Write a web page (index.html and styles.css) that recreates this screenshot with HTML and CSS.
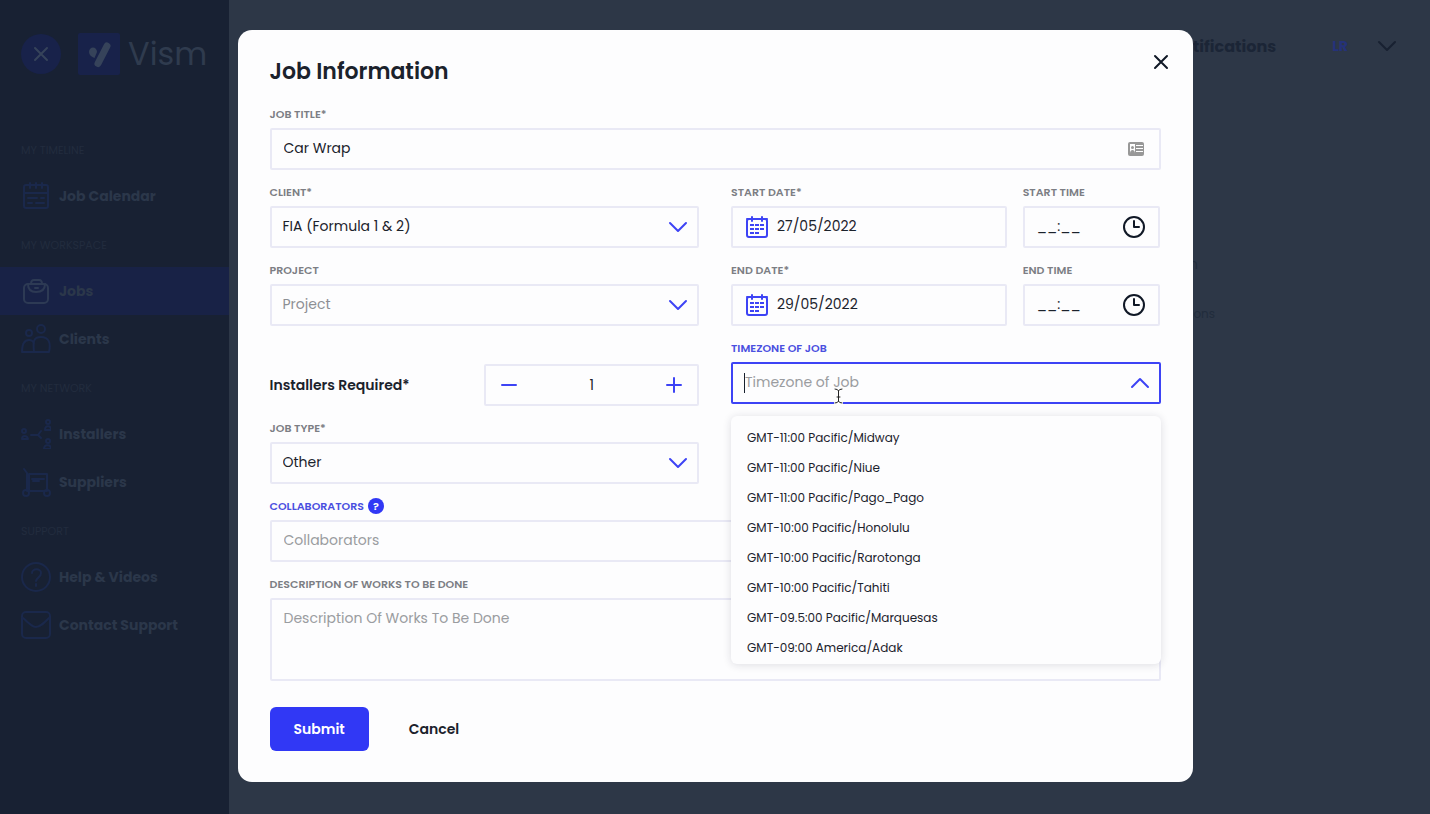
FILE: index.html
```html
<!DOCTYPE html>
<html lang="en">
<head>
  <meta charset="utf-8">
  <title>Vism - Job Information</title>
  <link rel="stylesheet" href="styles.css">
</head>
<body>
  <div class="page">
    <!-- Sidebar -->
    <aside class="sidebar">
      <div class="brand">
        <button class="brand-close" type="button" aria-label="Close menu">
          <svg width="16" height="16" viewBox="0 0 16 16"><path d="M2 2l12 12M14 2L2 14"/></svg>
        </button>
        <svg class="brand-mark" width="42" height="42" viewBox="0 0 42 42">
          <rect width="42" height="42" rx="2"/>
          <path class="leaf" d="M11 19c0-3 2-4.500 4-4.500s4 2 4 4.500l-2.500 6c-3-1-5.500-3-5.500-6z"/>
          <path class="stroke" d="M29 13L20 30.500"/>
        </svg>
        <span class="brand-name">Vism</span>
      </div>

      <nav class="menu">
        <h2 class="menu-heading">MY TIMELINE</h2>
        <a class="menu-item" href="#">
          <svg viewBox="0 0 30 30"><rect x="3" y="4" width="24" height="23" rx="2"/><path d="M3 12h24M9 2v5M15 2v5M21 2v5M7 17h9M15 22h8M7 22h4M20 17h3"/></svg>
          Job Calendar
        </a>
        <h2 class="menu-heading">MY WORKSPACE</h2>
        <a class="menu-item active" href="#">
          <svg viewBox="0 0 30 30"><rect x="3" y="8" width="24" height="19" rx="4"/><path d="M10 8c0-3 1-4 3-4h5c2 0 3 1 3 4M7 8c0 6 3 8 8 8s9-2 9-8M9 8h13M14 12h3"/></svg>
          Jobs
        </a>
        <a class="menu-item" href="#">
          <svg viewBox="0 0 30 30"><circle cx="8" cy="9" r="3"/><circle cx="20" cy="5" r="4"/><path d="M1 28c0-8 2-12 7-12 3 0 4 1 5 3M1 28h27c2-9 0-15-8-15s-8 5-7 15"/></svg>
          Clients
        </a>
        <h2 class="menu-heading">MY NETWORK</h2>
        <a class="menu-item" href="#">
          <svg viewBox="0 0 30 30"><circle cx="3" cy="12" r="2"/><circle cx="27" cy="3" r="2"/><circle cx="27" cy="22" r="2"/><path d="M1 20c0-4 5-4 6 0zM24 11c0-5 6-5 6 0zM23 30c0-5 7-5 7 0zM10 16h7l3-4M17 16l3 3"/></svg>
          Installers
        </a>
        <a class="menu-item" href="#">
          <svg viewBox="0 0 30 30"><path d="M3 2l3 4v18h19M8 7h18v17H8zM11 12h12M12 14h6"/><circle cx="5" cy="26" r="3"/><circle cx="26" cy="26" r="3"/></svg>
          Suppliers
        </a>
        <h2 class="menu-heading">SUPPORT</h2>
        <a class="menu-item" href="#">
          <svg viewBox="0 0 30 30"><circle cx="15" cy="15" r="14"/><path d="M11 11c0-5 9-5 9 0 0 4-4 4-5 8M15 22v2"/></svg>
          Help &amp; Videos
        </a>
        <a class="menu-item" href="#">
          <svg viewBox="0 0 30 30"><rect x="1" y="2" width="28" height="26" rx="4"/><path d="M2 8c6 5 9 9 13 9s8-4 13-9"/></svg>
          Contact Support
        </a>
      </nav>
    </aside>

    <!-- Page behind the dialog -->
    <main class="main">
      <header class="topbar">
        <span class="topbar-title">Notifications</span>
        <span class="avatar">LR</span>
        <svg class="topbar-arrow" width="20" height="12" viewBox="0 0 20 12"><path d="M2 2l8 8 8-8"/></svg>
      </header>
      <p class="behind-title">n</p>
      <p class="behind-text">ons</p>
    </main>
  </div>

  <!-- Job dialog -->
  <div class="overlay">
    <form class="modal" role="dialog" aria-labelledby="modalTitle">
      <button class="modal-close" type="button" aria-label="Close">
        <svg width="18" height="18" viewBox="0 0 18 18"><path d="M3 3l12 12M15 3L3 15"/></svg>
      </button>
      <h1 class="modal-title" id="modalTitle">Job Information</h1>

      <div class="form-grid">
        <div class="field full">
          <label for="jobTitle">JOB TITLE*</label>
          <div class="control">
            <input type="text" id="jobTitle" value="Car Wrap">
            <svg class="card-icon" width="16" height="14" viewBox="0 0 16 14">
              <rect width="16" height="14" rx="2" fill="#989898"/>
              <path d="M2 2h5v10H2zM8 3h7v1H8zM8 6h7v1H8zM8 9h7v1H8z" fill="#fff"/>
              <path d="M2 12c0-3 1-4 2.500-4S7 9 7 12z" fill="#989898"/>
              <circle cx="4.500" cy="5.500" r="1.500" fill="#989898"/>
            </svg>
          </div>
        </div>

        <div class="field">
          <label for="client">CLIENT*</label>
          <div class="control">
            <select id="client"><option>FIA (Formula 1 &amp; 2)</option></select>
            <svg class="arrow" width="20" height="12" viewBox="0 0 20 12"><path d="M2 2l8 8 8-8"/></svg>
          </div>
        </div>
        <div class="date-row">
          <div class="field">
            <label for="startDate">START DATE*</label>
            <div class="control with-calendar">
              <svg class="calendar" width="24" height="24" viewBox="0 0 24 24"><rect x="2" y="4" width="20" height="18" rx="2"/><path d="M2 4h20M7 2v4M17 2v4"/><path class="days" d="M5 10h14M5 14h14M5 18h9"/></svg>
              <input type="text" id="startDate" value="27/05/2022">
            </div>
          </div>
          <div class="field">
            <label for="startTime">START TIME</label>
            <div class="control">
              <input class="time" type="text" id="startTime" value="__:__">
              <svg class="clock" width="24" height="24" viewBox="0 0 24 24"><circle cx="12" cy="12" r="10"/><path d="M12 6v6h5"/></svg>
            </div>
          </div>
        </div>

        <div class="field">
          <label for="project">PROJECT</label>
          <div class="control">
            <select class="empty" id="project"><option>Project</option></select>
            <svg class="arrow" width="20" height="12" viewBox="0 0 20 12"><path d="M2 2l8 8 8-8"/></svg>
          </div>
        </div>
        <div class="date-row">
          <div class="field">
            <label for="endDate">END DATE*</label>
            <div class="control with-calendar">
              <svg class="calendar" width="24" height="24" viewBox="0 0 24 24"><rect x="2" y="4" width="20" height="18" rx="2"/><path d="M2 4h20M7 2v4M17 2v4"/><path class="days" d="M5 10h14M5 14h14M5 18h9"/></svg>
              <input type="text" id="endDate" value="29/05/2022">
            </div>
          </div>
          <div class="field">
            <label for="endTime">END TIME</label>
            <div class="control">
              <input class="time" type="text" id="endTime" value="__:__">
              <svg class="clock" width="24" height="24" viewBox="0 0 24 24"><circle cx="12" cy="12" r="10"/><path d="M12 6v6h5"/></svg>
            </div>
          </div>
        </div>

        <div class="installers">
          <label for="installers">Installers Required*</label>
          <div class="stepper">
            <button type="button" aria-label="Less"><svg width="18" height="18" viewBox="0 0 18 18"><path d="M2 9h14"/></svg></button>
            <input type="text" id="installers" value="1">
            <button type="button" aria-label="More"><svg width="18" height="18" viewBox="0 0 18 18"><path d="M2 9h14M9 2v14"/></svg></button>
          </div>
        </div>
        <div class="field timezone">
          <label class="blue" for="timezone">TIMEZONE OF JOB</label>
          <div class="control open">
            <input type="text" id="timezone" role="combobox" aria-expanded="true" aria-controls="timezoneList" placeholder="Timezone of Job">
            <span class="caret"></span>
            <svg class="arrow" width="20" height="12" viewBox="0 0 20 12"><path d="M2 10l8-8 8 8"/></svg>
            <svg class="pointer" width="9" height="16" viewBox="0 0 9 16"><path class="halo" d="M1 1q3 0 3.500 2Q5 1 8 1M4.500 3v10M1 15q3 0 3.500-2 .5 2 3.500 2M3 9h3"/><path d="M1 1q3 0 3.500 2Q5 1 8 1M4.500 3v10M1 15q3 0 3.500-2 .5 2 3.500 2M3 9h3"/></svg>
          </div>
          <ul class="dropdown" id="timezoneList" role="listbox">
            <li role="option">GMT-11:00 Pacific/Midway</li>
            <li role="option">GMT-11:00 Pacific/Niue</li>
            <li role="option">GMT-11:00 Pacific/Pago_Pago</li>
            <li role="option">GMT-10:00 Pacific/Honolulu</li>
            <li role="option">GMT-10:00 Pacific/Rarotonga</li>
            <li role="option">GMT-10:00 Pacific/Tahiti</li>
            <li role="option">GMT-09.5:00 Pacific/Marquesas</li>
            <li role="option">GMT-09:00 America/Adak</li>
          </ul>
        </div>

        <div class="field">
          <label for="jobType">JOB TYPE*</label>
          <div class="control">
            <select id="jobType"><option>Other</option></select>
            <svg class="arrow" width="20" height="12" viewBox="0 0 20 12"><path d="M2 2l8 8 8-8"/></svg>
          </div>
        </div>

        <div class="field full">
          <div class="label-row">
            <label class="blue" for="collaborators">COLLABORATORS</label>
            <button class="help" type="button">?</button>
          </div>
          <div class="control">
            <input type="text" id="collaborators" placeholder="Collaborators">
          </div>
        </div>

        <div class="field full">
          <label for="description">DESCRIPTION OF WORKS TO BE DONE</label>
          <textarea id="description" placeholder="Description Of Works To Be Done"></textarea>
        </div>
      </div>

      <div class="actions">
        <button class="submit" type="submit">Submit</button>
        <button class="cancel" type="button">Cancel</button>
      </div>
    </form>
  </div>
</body>
</html>
```

FILE: styles.css
```css
* {
  box-sizing: border-box;
}

body {
  margin: 0;
  background-color: #2d3747;
  font-family: Poppins, Inter, sans-serif;
  font-size: 14px;
  color: #1b222c;
}

button,
input,
select,
textarea {
  font: inherit;
  color: inherit;
}

button {
  padding: 0;
  border: none;
  background: none;
  cursor: pointer;
}

svg {
  flex: none;
  fill: none;
  stroke-width: 2;
  stroke-linecap: round;
  stroke-linejoin: round;
}

/* Page */
.page {
  display: flex;
  min-height: 100vh;
}

.sidebar {
  width: 229px;
  background-color: #182133;
}

.brand {
  display: flex;
  align-items: center;
  height: 125px;
  padding: 0 21px 18px;
}

.brand-close {
  display: flex;
  flex: none;
  align-items: center;
  justify-content: center;
  width: 40px;
  height: 40px;
  border-radius: 50%;
  background-color: #18224a;
}

.brand-close svg {
  stroke: #36435a;
}

.brand-mark {
  margin: 0 8px 0 17px;
  fill: #18224a;
}

.brand-mark .leaf {
  fill: #36435a;
}

.brand-mark .stroke {
  stroke: #36435a;
  stroke-width: 7;
}

.brand-name {
  font-size: 32px;
  color: #2f3b4e;
}

.menu-heading {
  height: 47px;
  margin: 0;
  padding: 4px 21px 0;
  font-size: 11px;
  font-weight: 400;
  line-height: 43px;
  color: #222c3e;
}

.menu-item {
  display: flex;
  align-items: center;
  gap: 8px;
  height: 48px;
  padding-left: 21px;
  font-weight: 700;
  color: #2b374a;
  text-decoration: none;
}

.menu-item svg {
  width: 30px;
  height: 30px;
  stroke: #1a284b;
}

.menu-item.active {
  background-color: #182246;
}

.menu-item.active svg {
  stroke: #2d3a54;
}

.main {
  flex: 1;
}

.topbar {
  display: flex;
  align-items: center;
  justify-content: flex-end;
  height: 92px;
  padding-right: 33px;
  font-weight: 700;
  color: #1b2536;
}

.topbar-title {
  font-size: 16px;
}

.avatar {
  margin: 0 29px 0 56px;
  color: #253279;
}

.topbar-arrow {
  stroke: #182131;
}

.behind-title,
.behind-text {
  margin: 0;
  color: #212c3c;
  text-align: right;
}

.behind-title {
  padding: 160px 232px 0 0;
  line-height: 24px;
}

.behind-text {
  padding: 28px 215px 0 0;
  font-size: 12px;
  line-height: 20px;
}

/* Dialog */
.overlay {
  position: absolute;
  inset: 0;
  padding: 30px;
}

.modal {
  position: relative;
  max-width: 955px;
  margin: 0 auto;
  padding: 25px 32px 31px;
  border-radius: 14px;
  background-color: #fdfdfe;
}

.modal-title {
  margin: 0 0 17px;
  font-size: 22px;
  font-weight: 600;
  line-height: 34px;
}

.modal-close {
  position: absolute;
  top: 23px;
  right: 23px;
  height: 18px;
}

.modal-close svg {
  display: block;
  stroke: #101826;
}

.form-grid {
  display: grid;
  grid-template-columns: 1fr 1fr;
  gap: 14px 32px;
}

.full {
  grid-column: 1 / -1;
}

.field label {
  display: block;
  margin-bottom: 6px;
  font-size: 11px;
  font-weight: 600;
  line-height: 16px;
  color: #7c7e84;
}

.field label.blue {
  color: #4a4fe0;
}

.label-row {
  display: flex;
  gap: 4px;
}

.help {
  width: 16px;
  height: 16px;
  border-radius: 50%;
  background-color: #3138f5;
  font-size: 11px;
  font-weight: 600;
  line-height: 16px;
  color: #fff;
}

.control {
  position: relative;
  display: flex;
  align-items: center;
  height: 42px;
  border: 2px solid #e9e9f5;
  border-radius: 2px;
}

.control input,
.control select {
  width: 100%;
  height: 38px;
  padding: 0 12px 2px;
  border: none;
  outline: none;
  background: none;
  appearance: none;
}

.control select {
  padding-left: 11px;
}

.control select.empty {
  color: #8d8f94;
}

input::placeholder,
textarea::placeholder {
  color: #9a9ca0;
}

.arrow {
  position: absolute;
  right: 9px;
  stroke: #3d43f5;
  pointer-events: none;
}

.card-icon {
  margin-right: 15px;
}

.date-row {
  display: grid;
  grid-template-columns: 2fr 1fr;
  gap: 16px;
}

.calendar {
  margin-left: 12px;
  stroke: #3d43f5;
}

.calendar .days {
  stroke-dasharray: 4 1;
  stroke-linecap: butt;
}

.control.with-calendar input {
  padding-left: 8px;
}

.control input.time {
  padding-right: 0;
}

.clock {
  margin-right: 12px;
  stroke: #101826;
}

.installers {
  display: flex;
  align-items: flex-end;
  justify-content: space-between;
  padding-top: 24px;
}

.installers label {
  font-weight: 600;
  line-height: 42px;
}

.stepper {
  display: flex;
  align-items: center;
  justify-content: space-between;
  width: 50%;
  height: 42px;
  padding: 0 14px;
  border: 2px solid #e9e9f5;
  border-radius: 2px;
}

.stepper button {
  height: 18px;
}

.stepper svg {
  display: block;
  stroke: #3d43f5;
}

.stepper input {
  width: 60px;
  border: none;
  background: none;
  text-align: center;
}

.timezone {
  position: relative;
}

.control.open {
  border-color: #3d43f5;
}

.caret {
  position: absolute;
  top: 9px;
  left: 11px;
  width: 1px;
  height: 20px;
  background-color: #17202d;
}

.pointer {
  position: absolute;
  top: 24px;
  left: 101px;
  stroke: #222;
  stroke-width: 1;
}

.pointer .halo {
  stroke: #fff;
  stroke-width: 3;
}

.dropdown {
  position: absolute;
  top: 76px;
  left: 0;
  right: 0;
  z-index: 1;
  height: 248px;
  margin: 0;
  padding: 7px 16px 0;
  overflow: hidden;
  border-radius: 6px;
  background-color: #fdfdfe;
  box-shadow: 0 1px 8px rgba(30, 30, 60, 0.14);
  font-size: 12px;
  line-height: 30px;
  list-style: none;
}

textarea {
  display: block;
  width: 100%;
  height: 83px;
  padding: 8px 12px;
  border: 2px solid #e9e9f5;
  border-radius: 2px;
  background: none;
  resize: none;
}

.actions {
  display: flex;
  gap: 40px;
  margin-top: 26px;
  font-weight: 600;
}

.submit {
  height: 44px;
  padding: 0 24px;
  border-radius: 6px;
  background-color: #3138f5;
  color: #fff;
}
```
